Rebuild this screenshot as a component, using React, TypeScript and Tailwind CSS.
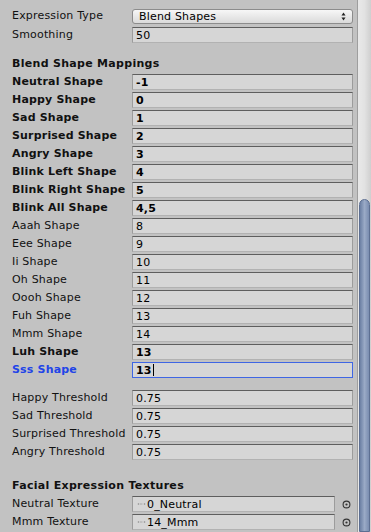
import React from "react";

type Row = { label: string; value: string; bold?: boolean };

const mappings: Row[] = [
  { label: "Neutral Shape", value: "-1", bold: true },
  { label: "Happy Shape", value: "0", bold: true },
  { label: "Sad Shape", value: "1", bold: true },
  { label: "Surprised Shape", value: "2", bold: true },
  { label: "Angry Shape", value: "3", bold: true },
  { label: "Blink Left Shape", value: "4", bold: true },
  { label: "Blink Right Shape", value: "5", bold: true },
  { label: "Blink All Shape", value: "4,5", bold: true },
  { label: "Aaah Shape", value: "8" },
  { label: "Eee Shape", value: "9" },
  { label: "Ii Shape", value: "10" },
  { label: "Oh Shape", value: "11" },
  { label: "Oooh Shape", value: "12" },
  { label: "Fuh Shape", value: "13" },
  { label: "Mmm Shape", value: "14" },
  { label: "Luh Shape", value: "13", bold: true },
];

const thresholds: Row[] = [
  { label: "Happy Threshold", value: "0.75" },
  { label: "Sad Threshold", value: "0.75" },
  { label: "Surprised Threshold", value: "0.75" },
  { label: "Angry Threshold", value: "0.75" },
];

function Field({ value, bold, focused }: { value: string; bold?: boolean; focused?: boolean }) {
  return (
    <div
      className={`flex-1 h-[16px] flex items-center pl-[3px] bg-[#d6d6d6] border ${
        focused
          ? "border-[#3f66e4]"
          : "border-t-[#5e5e5e] border-x-[#9c9c9c] border-b-[#b2b2b2]"
      } ${bold ? "font-bold" : ""}`}
    >
      <span className="text-black leading-none">{value}</span>
      {focused && <span className="ml-[1px] w-px h-[12px] bg-black" />}
    </div>
  );
}

function FieldRow({ row, focused }: { row: Row; focused?: boolean }) {
  return (
    <div className="flex items-center h-[16px]">
      <div
        className={`w-[132px] pl-[12px] whitespace-nowrap ${row.bold ? "font-bold" : ""} ${
          focused ? "text-[#2144e8]" : "text-[#111]"
        }`}
      >
        {row.label}
      </div>
      <Field value={row.value} bold={row.bold} focused={focused} />
    </div>
  );
}

function Header({ text }: { text: string }) {
  return (
    <div className="h-[16px] flex items-center pl-[12px] font-bold tracking-[0.3px] text-[#111] whitespace-nowrap">
      {text}
    </div>
  );
}

function TextureRow({ label, value }: { label: string; value: string }) {
  return (
    <div className="flex items-center h-[16px]">
      <div className="w-[132px] pl-[12px] text-[#111] whitespace-nowrap">{label}</div>
      <div className="w-[203px] h-[16px] flex items-center pl-[4px] bg-[#d6d6d6] border border-t-[#5e5e5e] border-x-[#9c9c9c] border-b-[#b2b2b2]">
        <svg width="9" height="6" viewBox="0 0 9 6" className="mr-[1px]">
          <circle cx="1.5" cy="3" r="0.8" fill="#8a8a8a" />
          <line x1="3" y1="3" x2="5.5" y2="3" stroke="#a0a0a0" strokeWidth="0.8" />
          <circle cx="7.5" cy="3" r="0.8" fill="#8a8a8a" />
        </svg>
        <span className="text-black leading-none">{value}</span>
      </div>
      <div className="flex-1 flex justify-center pl-[4px]">
        <svg width="9" height="9" viewBox="0 0 9 9">
          <circle cx="4.5" cy="4.5" r="3.4" fill="none" stroke="#333" strokeWidth="1.1" />
          <circle cx="4.5" cy="4.5" r="1.1" fill="#333" />
        </svg>
      </div>
    </div>
  );
}

export default function App() {
  return (
    <div className="w-[371px] h-[532px] bg-[#c2c2c2] flex overflow-hidden font-['DejaVu_Sans',sans-serif] text-[11px] tracking-[0.18px]">
      <div className="flex-1 flex flex-col pt-[9px] pr-[4px]">
        {/* Expression type dropdown */}
        <div className="flex items-center h-[15px]">
          <div className="w-[132px] pl-[12px] text-[#111]">Expression Type</div>
          <div className="flex-1 h-[15px] flex items-center justify-between pl-[6px] pr-[6px] rounded-[3px] border border-[#8c8c8c] bg-gradient-to-b from-[#f7f7f7] to-[#dadada]">
            <span className="text-black leading-none">Blend Shapes</span>
            <svg width="5" height="9" viewBox="0 0 5 9">
              <path d="M2.5 0.5 L4.5 3.5 L0.5 3.5 Z" fill="#222" />
              <path d="M2.5 8.5 L4.5 5.5 L0.5 5.5 Z" fill="#222" />
            </svg>
          </div>
        </div>
        <div className="mt-[3px]">
          <FieldRow row={{ label: "Smoothing", value: "50" }} />
        </div>

        {/* Blend shape mappings */}
        <div className="mt-[13px] flex flex-col gap-[2px]">
          <Header text="Blend Shape Mappings" />
          {mappings.map((r) => (
            <FieldRow key={r.label} row={r} />
          ))}
          <FieldRow row={{ label: "Sss Shape", value: "13", bold: true }} focused />
        </div>

        {/* Thresholds */}
        <div className="mt-[12px] flex flex-col gap-[2px]">
          {thresholds.map((r) => (
            <FieldRow key={r.label} row={r} />
          ))}
        </div>

        {/* Textures */}
        <div className="mt-[18px] flex flex-col gap-[2px]">
          <Header text="Facial Expression Textures" />
          <TextureRow label="Neutral Texture" value="0_Neutral" />
          <TextureRow label="Mmm Texture" value="14_Mmm" />
        </div>
      </div>

      {/* Scrollbar */}
      <div className="w-[14px] h-full flex flex-col border-l border-[#9e9e9e] bg-gradient-to-r from-[#e9e9e9] via-[#e2e2e2] to-[#cfcfcf]">
        <div className="h-[199px]" />
        <div className="flex-1 mx-[1px] rounded-t-full border border-[#5d6f92] bg-gradient-to-r from-[#6c80a4] via-[#9aaac6] to-[#7a8db0]" />
      </div>
    </div>
  );
}
